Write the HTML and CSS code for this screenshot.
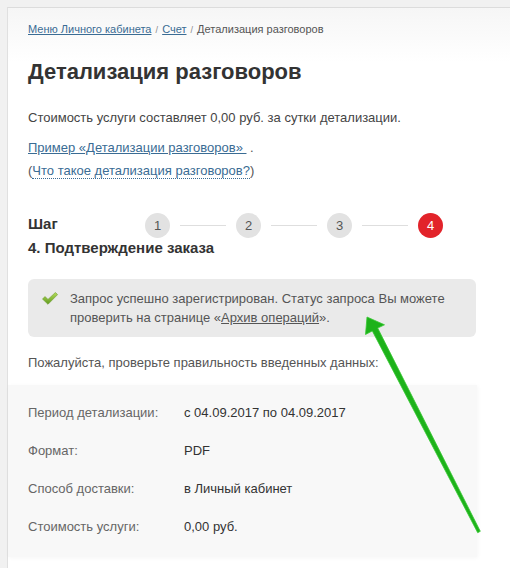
FILE: index.html
```html
<!DOCTYPE html>
<html lang="ru">
<head>
  <meta charset="UTF-8" />
  <title>Детализация разговоров</title>
  <link rel="stylesheet" href="styles.css">
</head>
<body>

<div class="panel">
  <div class="crumbs">
    <a href="#">Меню Личного кабинета</a> <span class="sep">/</span>
    <a href="#">Счет</a> <span class="sep">/</span>
    Детализация разговоров
  </div>

  <h1>Детализация разговоров</h1>

  <p class="cost">Стоимость услуги составляет 0,00 руб. за сутки детализации.</p>

  <div class="links">
    <a href="#">Пример «Детализации разговоров»&nbsp;</a> .<br>
    (<a href="#" class="dotted">Что такое детализация разговоров?</a>)
  </div>

  <div class="steps">
    <div class="step-title">Шаг</div>
    <div class="track">
      <span class="dot">1</span><span class="line"></span>
      <span class="dot">2</span><span class="line"></span>
      <span class="dot">3</span><span class="line"></span>
      <span class="dot active">4</span>
    </div>
  </div>
  <div class="step-name">4. Подтверждение заказа</div>

  <div class="notice">
    <svg class="check" width="16" height="13" viewBox="0 0 16 13">
      <defs>
        <linearGradient id="ck" x1="0" y1="0" x2="0" y2="1">
          <stop offset="0" stop-color="#b5dc5a"/>
          <stop offset="1" stop-color="#5f9a1e"/>
        </linearGradient>
      </defs>
      <path d="M0.5 7 L3 4.6 L6 7.4 L13.4 0.5 L15.6 2.6 L6 12.3 Z" fill="url(#ck)" stroke="#6a9c2a" stroke-width="0.6"/>
    </svg>
    <p>Запрос успешно зарегистрирован. Статус запроса Вы можете проверить на странице «<a href="#">Архив операций</a>».</p>
  </div>

  <p class="check-text">Пожалуйста, проверьте правильность введенных данных:</p>

  <div class="summary">
    <div class="row"><span class="label">Период детализации:</span><span>с 04.09.2017 по 04.09.2017</span></div>
    <div class="row"><span class="label">Формат:</span><span>PDF</span></div>
    <div class="row"><span class="label">Способ доставки:</span><span>в Личный кабинет</span></div>
    <div class="row"><span class="label">Стоимость услуги:</span><span>0,00 руб.</span></div>
  </div>
</div>

<svg class="arrow" width="510" height="568" viewBox="0 0 510 568">
  <polygon points="477.7,532.7 372.3,330.9 365.5,334.5 367,317 384.5,324.8 377.7,328.1 480.3,531.3" fill="#1db21a" stroke="#39c934" stroke-width="0.8" stroke-linejoin="round"/>
</svg>

</body>
</html>
```

FILE: styles.css
```css
body {
  margin: 0;
  background: #f1f1f1;
  font-family: "Liberation Sans", Arial, sans-serif;
  color: #444;
  position: relative;
  height: 568px;
  overflow: hidden;
}
.panel {
  box-sizing: border-box;
  height: 561px;
  margin: 7px 0 0 7px;
  border-top: 1px solid #dcdcdc;
  border-left: 1px solid #e0e0e0;
  background: linear-gradient(#f6f6f6, #fff 55px);
  padding: 14px 0 0 20px;
}
a {
  color: #3a6c94;
  text-decoration: underline;
}
.crumbs {
  font-size: 11px;
  line-height: 14px;
  color: #555;
}
.crumbs .sep {
  color: #888;
  font-size: 9px;
  margin: 0 1px;
}
h1 {
  font-size: 22px;
  line-height: 26px;
  color: #333;
  margin: 22px 0 0;
}
.cost {
  font-size: 13px;
  line-height: 18px;
  margin: 24px 0 0;
}
.links {
  font-size: 13px;
  line-height: 23px;
  margin-top: 9px;
  color: #555;
}
.links .dotted {
  text-decoration: none;
  border-bottom: 1px dotted #3a6c94;
}
.steps {
  display: flex;
  margin-top: 31px;
  height: 25px;
}
.step-title {
  width: 117px;
  font-size: 15px;
  font-weight: bold;
  color: #333;
  line-height: 20px;
  padding-top: 1px;
}
.track {
  display: flex;
  align-items: center;
}
.dot {
  width: 25px;
  height: 25px;
  border-radius: 50%;
  background: #e2e2e2;
  color: #555;
  font-size: 13px;
  line-height: 25px;
  text-align: center;
}
.dot.active {
  background: #e2232a;
  color: #fff;
}
.line {
  width: 46px;
  margin: 0 10px;
  border-top: 1px solid #dedede;
}
.step-name {
  font-size: 15px;
  font-weight: bold;
  color: #333;
  line-height: 20px;
}
.notice {
  display: flex;
  align-items: flex-start;
  width: 414px;
  margin-top: 21px;
  padding: 10px 20px 10px 14px;
  background: #eaeaea;
  border-radius: 6px;
  font-size: 13px;
  line-height: 19px;
  color: #555;
}
.notice p {
  margin: 0;
}
.notice .check {
  flex: none;
  margin: 3px 12px 0 0;
}
.notice a {
  color: #555;
}
.check-text {
  font-size: 13px;
  line-height: 18px;
  color: #555;
  margin: 17px 0 0;
}
.summary {
  width: 449px;
  margin: 13px 0 0 -20px;
  padding: 9px 0 11px 20px;
  background: #f8f8f8;
  box-shadow: 1px 1px 4px rgba(0,0,0,0.04);
  font-size: 13px;
  color: #333;
}
.row {
  display: flex;
  line-height: 38px;
}
.label {
  width: 156px;
  color: #666;
}
.arrow {
  position: absolute;
  left: 0;
  top: 0;
  pointer-events: none;
}
```
